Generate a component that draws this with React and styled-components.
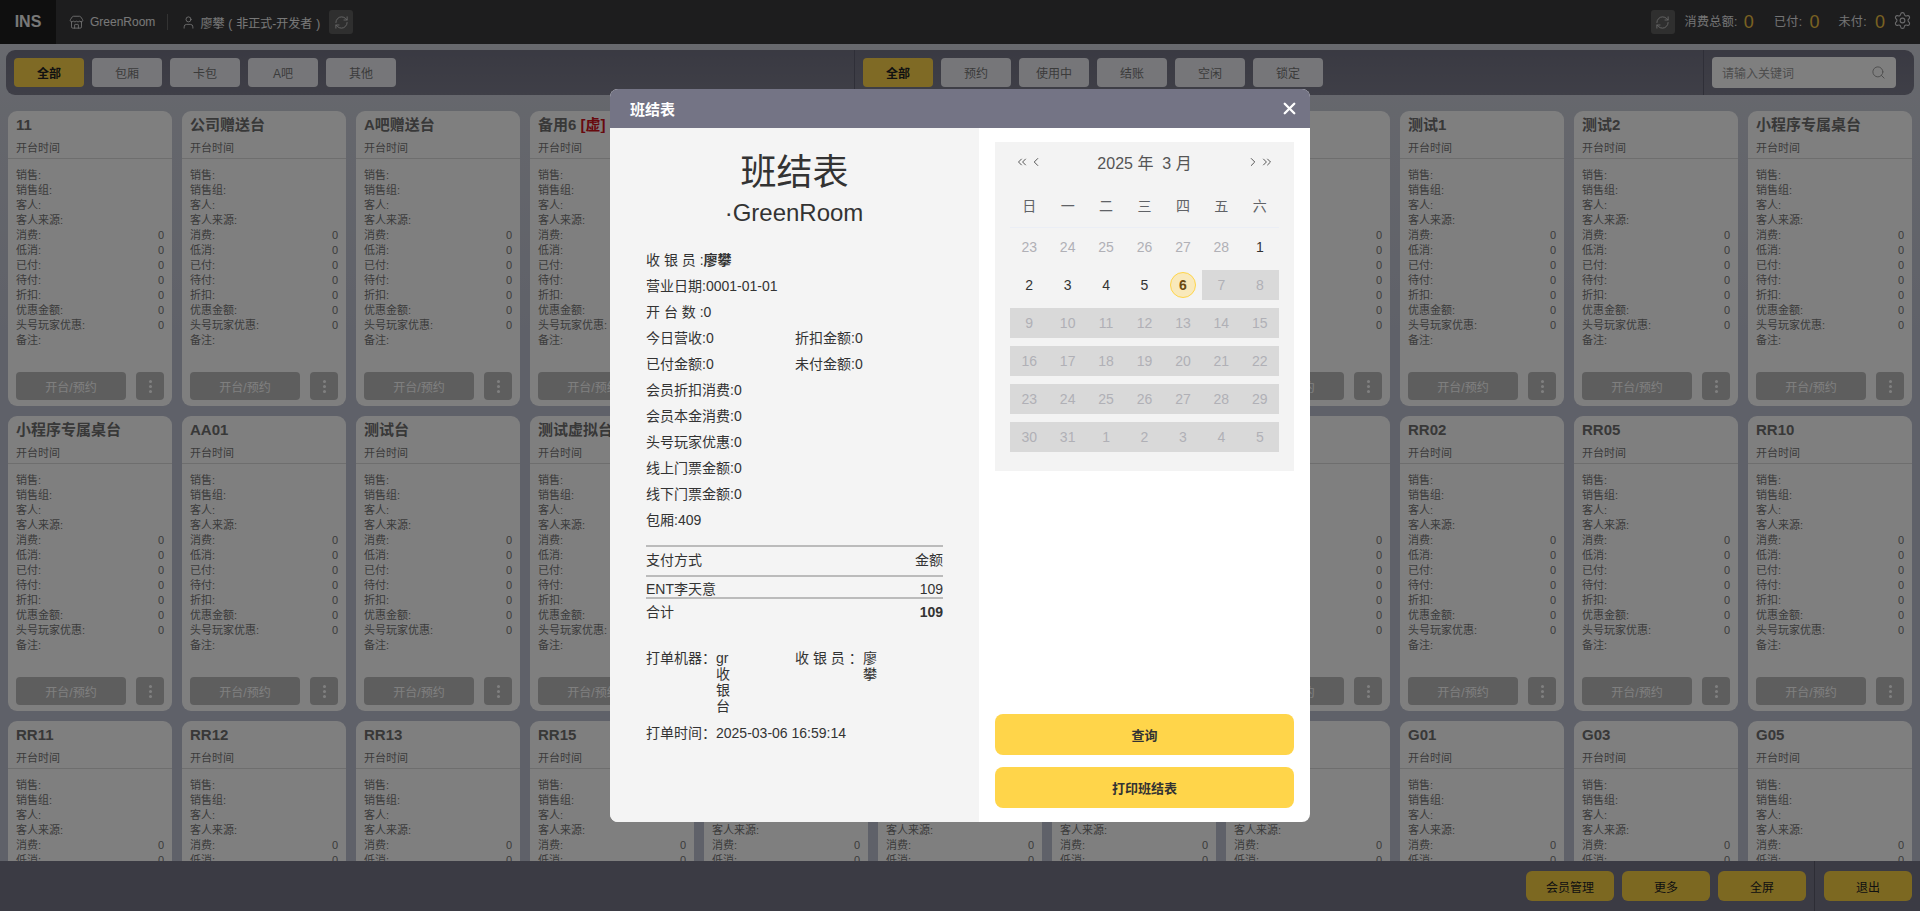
import React from "react";
import styled, { createGlobalStyle } from "styled-components";
import { ChevronLeft, ChevronRight, ChevronsLeft, ChevronsRight, RefreshCw, Search, Settings, Store, User, X } from "lucide-react";

const FONT = `"Liberation Sans", "Noto Sans CJK SC", sans-serif`;

const Global = createGlobalStyle`
  html, body { margin: 0; padding: 0; height: 100%; overflow: hidden; }
  body { font-family: ${FONT}; background: #c2c6d4; }
  * { box-sizing: border-box; }
`;

const Page = styled.div`
  height: 911px;
  display: flex;
  flex-direction: column;
  overflow: hidden;
  background: linear-gradient(180deg, #d4d7e0 0, #cbced9 110px, #bfc3d2 330px, #bfc3d2 100%);
`;

const Header = styled.header`
  height: 44px;
  flex: none;
  display: flex;
  align-items: center;
  background: #3a3a3c;
  color: #f0f0f0;
  font-size: 12px;
`;

const Logo = styled.div`
  width: 56px;
  height: 44px;
  display: flex;
  align-items: center;
  justify-content: center;
  background: #1e1e1e;
  font-size: 16px;
  font-weight: 700;
`;

const HeadItem = styled.div`
  display: flex;
  align-items: center;
  gap: ${(p) => p.$gap}px;
  padding-left: 13px;
  height: 14px;
  word-spacing: ${(p) => p.$spread || 0}px;
`;

const HeadDivider = styled.span`
  width: 1px;
  height: 16px;
  background: #666;
  margin-left: 12px;
`;

const IconBtn = styled.div`
  width: 24px;
  height: 24px;
  border-radius: 3px;
  background: #5e5e5e;
  color: #ccc;
  display: flex;
  align-items: center;
  justify-content: center;
  margin-left: ${(p) => p.$ml || 0}px;
`;

const HeadRight = styled.div`
  margin-left: auto;
  display: flex;
  align-items: center;
  padding-right: 8px;
  color: #e8e8ea;
`;

const Stat = styled.div`
  display: flex;
  align-items: center;
  margin-left: ${(p) => p.$ml}px;
  line-height: 24px;
  letter-spacing: 0.4px;
`;

const StatValue = styled.span`
  margin-left: ${(p) => p.$ml}px;
  font-size: 18px;
  letter-spacing: 0;
  color: #f2c444;
`;

const GearWrap = styled.span`
  display: flex;
  margin-left: 8px;
  margin-top: -4px;
  color: #d5d5d8;
`;

const Toolbar = styled.div`
  flex: none;
  margin: 6px 6px 16px;
  height: 45px;
  display: flex;
  align-items: stretch;
  border-radius: 9px;
  background: linear-gradient(180deg, #747485, #7e7e8f);
`;

const ToolGroup = styled.div`
  display: flex;
  align-items: flex-start;
  gap: 8px;
  padding: 8px 0 0 8px;
  width: ${(p) => p.$w}px;
  border-right: 1px solid #5f5f70;
`;

const FilterBtn = styled.div`
  width: 70px;
  height: 29px;
  border-radius: 4px;
  background: ${(p) => (p.$active ? "#ffd54a" : "#ecedf2")};
  color: ${(p) => (p.$active ? "#222" : "#777")};
  font-weight: ${(p) => (p.$active ? 700 : 400)};
  font-size: 12px;
  display: flex;
  align-items: center;
  justify-content: center;
`;

const SearchWrap = styled.div`
  display: flex;
  padding: 7px 0 0 8px;
`;

const SearchBox = styled.div`
  width: 184px;
  height: 31px;
  border-radius: 4px;
  background: #fff;
  color: #999;
  font-size: 12px;
  display: flex;
  align-items: center;
  justify-content: space-between;
  padding: 0 10px;
`;

const Main = styled.main`
  flex: 1;
  min-height: 0;
  overflow: hidden;
  padding: 0 8px;
`;

const Grid = styled.div`
  display: grid;
  grid-template-columns: repeat(11, 164px);
  grid-auto-rows: 295px;
  gap: 10px;
`;

const Card = styled.article`
  background: #fff;
  border-radius: 9px;
  color: #777;
  display: flex;
  flex-direction: column;
  overflow: hidden;
`;

const CardHead = styled.div`
  height: 48px;
  padding: 5px 8px 0;
  border-bottom: 1px solid #ddd;
  flex: none;
`;

const CardName = styled.div`
  font-size: 15px;
  line-height: 18px;
  font-weight: 700;
  color: #707070;
  white-space: nowrap;
`;

const Virtual = styled.span`
  color: #d0121b;
`;

const CardTime = styled.div`
  font-size: 11px;
  line-height: 15px;
  margin-top: 7px;
`;

const CardBody = styled.div`
  padding: 9px 8px 0;
  flex: 1;
`;

const Row = styled.div`
  display: flex;
  justify-content: space-between;
  font-size: 11px;
  line-height: 15px;
  height: 15px;
`;

const CardActions = styled.div`
  display: flex;
  gap: 10px;
  padding: 0 8px 6px;
`;

const OpenBtn = styled.div`
  flex: 1;
  height: 28px;
  border-radius: 4px;
  background: #bdbdbd;
  color: #fff;
  font-size: 12px;
  display: flex;
  align-items: center;
  justify-content: center;
`;

const MoreBtn = styled.div`
  width: 28px;
  height: 28px;
  border-radius: 4px;
  background: #bdbdbd;
  display: flex;
  flex-direction: column;
  gap: 2px;
  align-items: center;
  justify-content: center;
`;

const Dot = styled.i`
  width: 3px;
  height: 3px;
  border-radius: 50%;
  background: #fff;
`;

const Footer = styled.footer`
  height: 50px;
  flex: none;
  background: #767689;
  display: flex;
  justify-content: flex-end;
  align-items: center;
  padding-right: 8px;
  position: relative;
  z-index: 1;
`;

const FootBtn = styled.div`
  width: 88px;
  height: 30px;
  border-radius: 6px;
  background: #f9d043;
  color: #222;
  font-size: 12px;
  display: flex;
  align-items: center;
  justify-content: center;
  margin-left: 8px;
`;

const FootLine = styled.span`
  width: 1px;
  height: 50px;
  background: #5a5a6a;
  margin-left: 8px;
  margin-right: 1px;
`;

const Overlay = styled.div`
  position: fixed;
  inset: 0;
  z-index: 5;
  background: rgba(0, 0, 0, 0.5);
`;

const Modal = styled.section`
  position: fixed;
  z-index: 6;
  left: 610px;
  top: 89px;
  width: 700px;
  height: 733px;
  border-radius: 8px;
  overflow: hidden;
  background: #fff;
  display: flex;
  flex-direction: column;
`;

const ModalHead = styled.div`
  height: 39px;
  flex: none;
  background: #747485;
  color: #fff;
  display: flex;
  align-items: center;
  justify-content: space-between;
  padding: 0 11px 0 20px;
  font-size: 15px;
  font-weight: 700;
  font-family: "Liberation Serif", "Noto Sans CJK SC", serif;
`;

const ModalBody = styled.div`
  flex: 1;
  min-height: 0;
  display: flex;
`;

const Receipt = styled.div`
  width: 369px;
  flex: none;
  background: #f4f4f4;
  padding: 23px 36px 0;
  color: #333;
  font-size: 14px;
`;

const ReceiptTitle = styled.h1`
  margin: 0;
  font-size: 36px;
  line-height: 44px;
  font-weight: 400;
  text-align: center;
`;

const ReceiptShop = styled.div`
  font-size: 24px;
  line-height: 35px;
  text-align: center;
  margin: 0 0 17px -1px;
`;

const Line = styled.div`
  line-height: 26px;
  height: 26px;
  white-space: nowrap;
`;

const TwoCols = styled.div`
  display: grid;
  grid-template-columns: 149px 1fr;
`;

const Strong = styled.b`
  font-weight: 700;
`;

const PayHead = styled.div`
  display: flex;
  justify-content: space-between;
  border-top: 2px solid #bbb;
  border-bottom: 2px solid #bbb;
  margin-top: 12px;
  height: 32px;
  line-height: 26px;
`;

const PayRow = styled.div`
  display: flex;
  justify-content: space-between;
  height: 22px;
  line-height: 24px;
  border-bottom: 2px solid #bbb;
`;

const PayTotal = styled.div`
  display: flex;
  justify-content: space-between;
  height: 26px;
  line-height: 26px;
`;

const PrintRow = styled.div`
  display: flex;
  line-height: 16px;
`;

const PrintLabel = styled.span`
  flex: none;
  width: ${(p) => p.$w}px;
  white-space: nowrap;
`;

const PrintValue = styled.span`
  width: ${(p) => (p.$wide ? "auto" : "16px")};
  white-space: ${(p) => (p.$wide ? "nowrap" : "normal")};
`;

const PrintBlock = styled.div`
  margin-top: 25px;
`;

const PrintTime = styled.div`
  margin-top: 11px;
`;

const Side = styled.div`
  flex: 1;
  display: flex;
  flex-direction: column;
  padding: 14px 16px 14px 16px;
`;

const Calendar = styled.div`
  height: 329px;
  flex: none;
  background: #f3f3f3;
  padding: 0 15px;
`;

const CalHead = styled.div`
  height: 39px;
  display: flex;
  align-items: center;
  justify-content: space-between;
  color: #555;
  padding: 0 5px;
`;

const CalTitle = styled.div`
  font-size: 16px;
  white-space: pre;
`;

const Arrows = styled.div`
  display: flex;
  align-items: center;
`;

const WeekRow = styled.div`
  display: grid;
  grid-template-columns: repeat(7, 1fr);
  margin-top: 5px;
  height: 42px;
  padding-bottom: 3px;
  border-bottom: 1px solid #ebeef5;
  align-items: center;
  font-size: 14px;
  text-align: center;
  color: #606266;
`;

const DayRow = styled.div`
  display: grid;
  grid-template-columns: repeat(7, 1fr);
  height: 38px;
  padding: 4px 0;
`;

const Day = styled.div`
  height: 30px;
  display: flex;
  align-items: center;
  justify-content: center;
  font-size: 14px;
  color: ${(p) => (p.$tone === "now" ? "#333" : "#b0b0b6")};
  background: ${(p) => (p.$tone === "off" ? "#d9d9d9" : "transparent")};
`;

const Today = styled.span`
  width: 26px;
  height: 26px;
  border-radius: 50%;
  background: #f9e9bb;
  border: 1px solid #ffd54a;
  color: #6b4a12;
  font-weight: 700;
  display: flex;
  align-items: center;
  justify-content: center;
`;

const SideActions = styled.div`
  margin-top: auto;
  display: flex;
  flex-direction: column;
  gap: 12px;
`;

const BigBtn = styled.div`
  height: 41px;
  border-radius: 8px;
  background: #ffd54a;
  color: #333;
  font-size: 13px;
  font-weight: 700;
  display: flex;
  align-items: center;
  justify-content: center;
`;

const LABELS = ["销售:", "销售组:", "客人:", "客人来源:", "消费:", "低消:", "已付:", "待付:", "折扣:", "优惠金额:", "头号玩家优惠:", "备注:"];
const NAMES = [
  "11", "公司赠送台", "A吧赠送台", "备用6", "备用7", "备用8", "备用9", "备用10", "测试1", "测试2", "小程序专属桌台",
  "小程序专属桌台", "AA01", "测试台", "测试虚拟台", "虚拟台2", "虚拟台3", "虚拟台4", "RR01", "RR02", "RR05", "RR10",
  "RR11", "RR12", "RR13", "RR15", "RR16", "RR17", "RR18", "RR19", "G01", "G03", "G05",
];

const TableCard = ({ name, virtual }) => (
  <Card>
    <CardHead>
      <CardName>
        {name} {virtual && <Virtual>[虚]</Virtual>}
      </CardName>
      <CardTime>开台时间</CardTime>
    </CardHead>
    <CardBody>
      {LABELS.map((l, i) => (
        <Row key={l}>
          <span>{l}</span>
          {i >= 4 && i < 11 && <span>0</span>}
        </Row>
      ))}
    </CardBody>
    <CardActions>
      <OpenBtn>开台/预约</OpenBtn>
      <MoreBtn>
        <Dot />
        <Dot />
        <Dot />
      </MoreBtn>
    </CardActions>
  </Card>
);

const WEEKS = [
  [[23, "prev"], [24, "prev"], [25, "prev"], [26, "prev"], [27, "prev"], [28, "prev"], [1, "now"]],
  [[2, "now"], [3, "now"], [4, "now"], [5, "now"], [6, "today"], [7, "off"], [8, "off"]],
  [9, 10, 11, 12, 13, 14, 15].map((d) => [d, "off"]),
  [16, 17, 18, 19, 20, 21, 22].map((d) => [d, "off"]),
  [23, 24, 25, 26, 27, 28, 29].map((d) => [d, "off"]),
  [30, 31, 1, 2, 3, 4, 5].map((d) => [d, "off"]),
];

export default function App() {
  return (
    <Page>
      <Global />
      <Header>
        <Logo>INS</Logo>
        <HeadItem $gap={6}>
          <Store size={15} strokeWidth={1.3} />
          GreenRoom
        </HeadItem>
        <HeadDivider />
        <HeadItem $gap={4} $spread={0.6}>
          <User size={15} strokeWidth={1.3} />
          廖攀 ( 非正式-开发者 )
        </HeadItem>
        <IconBtn $ml={9}>
          <RefreshCw size={15} strokeWidth={1.5} />
        </IconBtn>
        <HeadRight>
          <IconBtn>
            <RefreshCw size={15} strokeWidth={1.5} />
          </IconBtn>
          <Stat $ml={10}>消费总额:<StatValue $ml={6}>0</StatValue></Stat>
          <Stat $ml={20}>已付:<StatValue $ml={7}>0</StatValue></Stat>
          <Stat $ml={19}>未付:<StatValue $ml={8}>0</StatValue></Stat>
          <GearWrap>
            <Settings size={19} strokeWidth={1.4} />
          </GearWrap>
        </HeadRight>
      </Header>

      <Toolbar>
        <ToolGroup $w={849}>
          <FilterBtn $active>全部</FilterBtn>
          {["包厢", "卡包", "A吧", "其他"].map((t) => (
            <FilterBtn key={t}>{t}</FilterBtn>
          ))}
        </ToolGroup>
        <ToolGroup $w={849}>
          <FilterBtn $active>全部</FilterBtn>
          {["预约", "使用中", "结账", "空闲", "锁定"].map((t) => (
            <FilterBtn key={t}>{t}</FilterBtn>
          ))}
        </ToolGroup>
        <SearchWrap>
          <SearchBox>
            请输入关键词
            <Search size={15} strokeWidth={1.5} color="#999" />
          </SearchBox>
        </SearchWrap>
      </Toolbar>

      <Main>
        <Grid>
          {NAMES.map((n, i) => (
            <TableCard key={i} name={n} virtual={n === "备用6"} />
          ))}
        </Grid>
      </Main>

      <Footer>
        <FootBtn>会员管理</FootBtn>
        <FootBtn>更多</FootBtn>
        <FootBtn>全屏</FootBtn>
        <FootLine />
        <FootBtn>退出</FootBtn>
      </Footer>

      <Overlay />
      <Modal>
        <ModalHead>
          班结表
          <X size={19} strokeWidth={3} />
        </ModalHead>
        <ModalBody>
          <Receipt>
            <ReceiptTitle>班结表</ReceiptTitle>
            <ReceiptShop>·GreenRoom</ReceiptShop>
            <Line>收 银 员 :<Strong>廖攀</Strong></Line>
            <Line>营业日期:0001-01-01</Line>
            <Line>开 台 数 :0</Line>
            <TwoCols>
              <Line>今日营收:0</Line>
              <Line>折扣金额:0</Line>
              <Line>已付金额:0</Line>
              <Line>未付金额:0</Line>
            </TwoCols>
            <Line>会员折扣消费:0</Line>
            <Line>会员本金消费:0</Line>
            <Line>头号玩家优惠:0</Line>
            <Line>线上门票金额:0</Line>
            <Line>线下门票金额:0</Line>
            <Line>包厢:409</Line>
            <PayHead>
              <span>支付方式</span>
              <span>金额</span>
            </PayHead>
            <PayRow>
              <span>ENT李天意</span>
              <span>109</span>
            </PayRow>
            <PayTotal>
              <span>合计</span>
              <Strong>109</Strong>
            </PayTotal>
            <PrintBlock>
              <TwoCols>
                <PrintRow>
                  <PrintLabel $w={70}>打单机器：</PrintLabel>
                  <PrintValue>gr收银台</PrintValue>
                </PrintRow>
                <PrintRow>
                  <PrintLabel $w={68}>收 银 员 ：</PrintLabel>
                  <PrintValue>廖攀</PrintValue>
                </PrintRow>
              </TwoCols>
              <PrintTime>
                <PrintRow>
                  <PrintLabel $w={70}>打单时间：</PrintLabel>
                  <PrintValue $wide>2025-03-06 16:59:14</PrintValue>
                </PrintRow>
              </PrintTime>
            </PrintBlock>
          </Receipt>
          <Side>
            <Calendar>
              <CalHead>
                <Arrows>
                  <ChevronsLeft size={14} strokeWidth={1.7} />
                  <ChevronLeft size={14} strokeWidth={1.7} />
                </Arrows>
                <CalTitle>2025 年  3 月</CalTitle>
                <Arrows>
                  <ChevronRight size={14} strokeWidth={1.7} />
                  <ChevronsRight size={14} strokeWidth={1.7} />
                </Arrows>
              </CalHead>
              <WeekRow>
                {["日", "一", "二", "三", "四", "五", "六"].map((d) => (
                  <span key={d}>{d}</span>
                ))}
              </WeekRow>
              {WEEKS.map((week, w) => (
                <DayRow key={w}>
                  {week.map(([d, tone], i) => (
                    <Day key={i} $tone={tone === "today" ? "now" : tone}>
                      {tone === "today" ? <Today>{d}</Today> : d}
                    </Day>
                  ))}
                </DayRow>
              ))}
            </Calendar>
            <SideActions>
              <BigBtn>查询</BigBtn>
              <BigBtn>打印班结表</BigBtn>
            </SideActions>
          </Side>
        </ModalBody>
      </Modal>
    </Page>
  );
}
